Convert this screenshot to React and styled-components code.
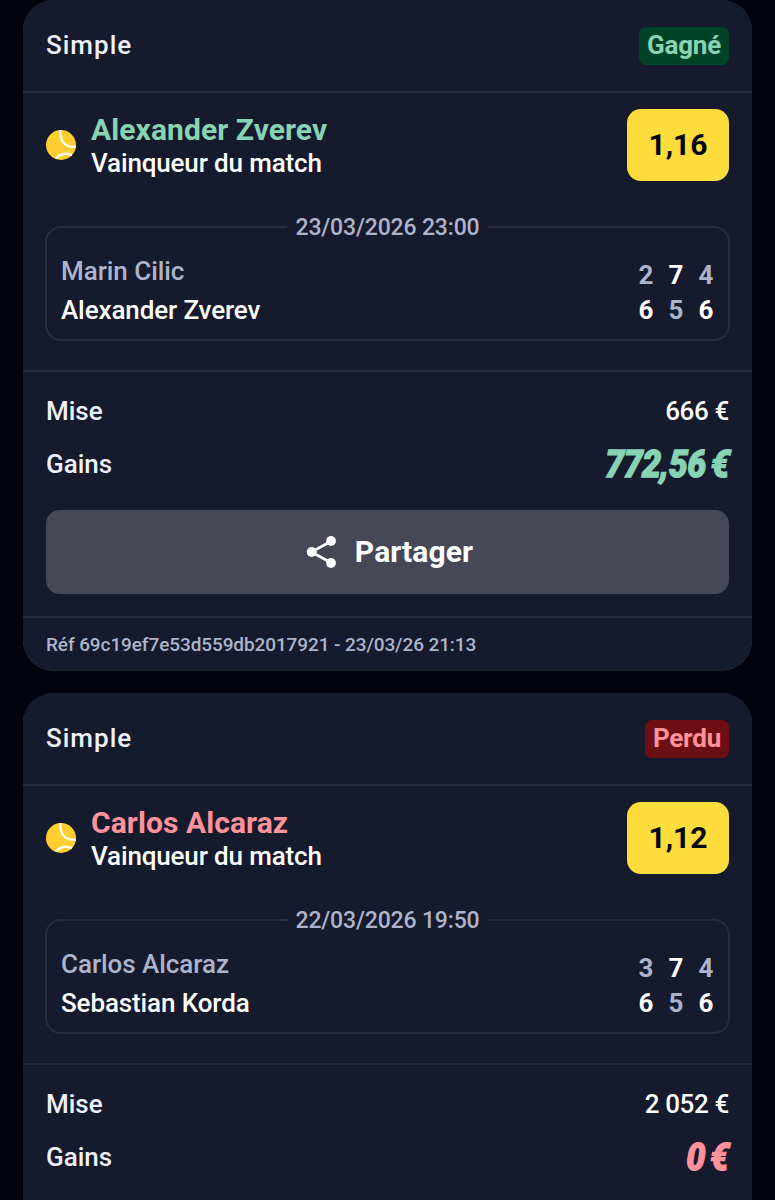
import React from "react";
import styled, { createGlobalStyle } from "styled-components";

const Global = createGlobalStyle`
  * { box-sizing: border-box; }
  html, body { margin: 0; height: 1200px; overflow: hidden; background: #03030f; }
  body { font-family: Roboto, "Liberation Sans", sans-serif; font-weight: 500; color: #fff; }
`;

const tones = {
  won: { text: "#87d3b4", badge: "#004227" },
  lost: { text: "#ff929b", badge: "#6d0e14" },
};
const line = "#2a2d40";
const muted = "#adb4ca";

const Page = styled.main`
  display: flex;
  flex-direction: column;
  gap: 23px;
  height: 1200px;
  padding: 0 23px;
  overflow: hidden;
`;

const Card = styled.article`
  flex: none;
  height: 670px;
  border-radius: 30px;
  background: #161a2d;
  overflow: hidden;
  box-shadow: 0 0.5px 0 #3b3d4c;
`;

const Header = styled.header`
  display: flex;
  align-items: center;
  justify-content: space-between;
  height: 93px;
  padding: 0 23px;
  border-bottom: 2px solid ${line};
`;

const BetType = styled.h2`
  margin: 0 0 1px;
  font-size: 26px;
  line-height: 30px;
  font-weight: 500;
  letter-spacing: 1px;
  color: #eef0fc;
`;

const Badge = styled.span`
  height: 38px;
  padding: 0 8px;
  border-radius: 7px;
  font-size: 26px;
  line-height: 37px;
  font-weight: 700;
  letter-spacing: -0.2px;
  color: ${(p) => tones[p.$tone].text};
  background: ${(p) => tones[p.$tone].badge};
`;

const Selection = styled.section`
  display: flex;
  align-items: center;
  height: 72px;
  margin: 16px 23px 45px;
`;

const Ball = styled.svg`
  width: 30px;
  height: 30px;
  margin-right: 15px;
`;

const Pick = styled.div`
  flex: 1;
  padding-top: 2px;
`;

const PickName = styled.div`
  font-size: 30px;
  line-height: 34px;
  font-weight: 700;
  letter-spacing: 0.08px;
  color: ${(p) => tones[p.$tone].text};
`;

const Market = styled.div`
  font-size: 26px;
  line-height: 32px;
  letter-spacing: -0.15px;
`;

const Odds = styled.div`
  width: 102px;
  height: 72px;
  border-radius: 14px;
  background: #fddc3b;
  color: #05050d;
  font-size: 30px;
  line-height: 72px;
  font-weight: 700;
  text-align: center;
`;

const Match = styled.section`
  display: flex;
  flex-direction: column;
  height: 115px;
  margin: 0 22px 29px;
  border: 2px solid ${line};
  border-radius: 16px;
`;

const Kickoff = styled.time`
  align-self: center;
  height: 26px;
  margin-top: -14px;
  padding: 1px 8px 0;
  background: #161a2d;
  color: ${muted};
  font-size: 23px;
  line-height: 26px;
  letter-spacing: -0.16px;
`;

const Board = styled.div`
  display: flex;
  justify-content: space-between;
  padding: 12px 7px 0 14px;
`;

const Names = styled.div`
  display: flex;
  flex-direction: column;
`;

const Player = styled.span`
  font-size: 26px;
  line-height: 39px;
  letter-spacing: ${(p) => (p.$winner ? "-0.12px" : "-0.05px")};
  color: ${(p) => (p.$winner ? "#fff" : muted)};
`;

const Sets = styled.div`
  display: grid;
  grid-template-columns: repeat(3, 30px);
  grid-auto-rows: 35px;
  padding-top: 6px;
`;

const SetScore = styled.span`
  font-size: 26px;
  line-height: 35px;
  font-weight: 700;
  text-align: center;
  color: ${(p) => (p.$won ? "#fff" : muted)};
`;

const Summary = styled.section`
  height: 246px;
  padding: 12px 23px 0;
  border-top: 2px solid ${line};
`;

const Amount = styled.div`
  display: flex;
  justify-content: space-between;
  align-items: center;
  height: 53px;
  font-size: 26px;
`;

const Label = styled.span`
  color: #eef0fc;
`;

const Stake = styled.span`
  letter-spacing: -0.35px;
`;

const Winnings = styled.strong`
  padding-top: 2px;
  font-size: 38px;
  line-height: 53px;
  font-style: italic;
  font-weight: 900;
  letter-spacing: -0.5px;
  word-spacing: -3px;
  color: ${(p) => tones[p.$tone].text};
  -webkit-text-stroke: 1.3px ${(p) => tones[p.$tone].text};
  transform: scaleX(0.885) skewX(-2deg);
  transform-origin: right center;
`;

const ShareButton = styled.button`
  display: flex;
  align-items: center;
  justify-content: center;
  gap: 18px;
  width: 100%;
  height: 84px;
  margin-top: 20px;
  padding: 0 0 1px 4px;
  border: 0;
  border-radius: 14px;
  background: #464858;
  color: #fff;
  font: 700 30px Roboto, sans-serif;
  letter-spacing: 0.1px;
`;

const ShareIcon = styled.svg`
  width: 31px;
  height: 34px;
`;

const Reference = styled.footer`
  height: 54px;
  padding: 0 23px;
  border-top: 2px solid ${line};
  color: ${muted};
  font-size: 19px;
  line-height: 53px;
  letter-spacing: -0.1px;
`;

const bets = [
  {
    tone: "won", status: "Gagné", pick: "Alexander Zverev", odds: "1,16",
    date: "23/03/2026 23:00", players: ["Marin Cilic", "Alexander Zverev"],
    sets: [[2, 7, 4], [6, 5, 6]], stake: "666 €", gains: "772,56 €",
    reference: "Réf 69c19ef7e53d559db2017921 - 23/03/26 21:13",
  },
  {
    tone: "lost", status: "Perdu", pick: "Carlos Alcaraz", odds: "1,12",
    date: "22/03/2026 19:50", players: ["Carlos Alcaraz", "Sebastian Korda"],
    sets: [[3, 7, 4], [6, 5, 6]], stake: "2 052 €", gains: "0 €",
  },
];

function TennisBall() {
  return (
    <Ball viewBox="0 0 30 30">
      <circle cx="15" cy="15" r="15" fill="#ffcf31" />
      <g fill="none" stroke="#fffbe8" strokeWidth="2.4">
        <path d="M14.3 0C14.1 11.5 18.5 17.5 29.9 16.8" />
        <path d="M10 28.6C13.5 23.8 20 22.3 26 25.1" />
      </g>
    </Ball>
  );
}

function BetCard({ bet }) {
  return (
    <Card>
      <Header>
        <BetType>Simple</BetType>
        <Badge $tone={bet.tone}>{bet.status}</Badge>
      </Header>
      <Selection>
        <TennisBall />
        <Pick>
          <PickName $tone={bet.tone}>{bet.pick}</PickName>
          <Market>Vainqueur du match</Market>
        </Pick>
        <Odds>{bet.odds}</Odds>
      </Selection>
      <Match>
        <Kickoff>{bet.date}</Kickoff>
        <Board>
          <Names>
            {bet.players.map((name, i) => (
              <Player key={name} $winner={i === 1}>{name}</Player>
            ))}
          </Names>
          <Sets>
            {bet.sets.map((row, r) =>
              row.map((score, i) => (
                <SetScore key={`${r}-${i}`} $won={score > bet.sets[1 - r][i]}>{score}</SetScore>
              ))
            )}
          </Sets>
        </Board>
      </Match>
      <Summary>
        <Amount><Label>Mise</Label><Stake>{bet.stake}</Stake></Amount>
        <Amount><Label>Gains</Label><Winnings $tone={bet.tone}>{bet.gains}</Winnings></Amount>
        {bet.reference && (
          <ShareButton>
            <ShareIcon viewBox="0 0 31 34">
              <path d="M25.5 6L5.5 17L25.5 28" fill="none" stroke="#fff" strokeWidth="2.6" />
              <g fill="#fff">
                <circle cx="25" cy="6" r="4.9" />
                <circle cx="5.7" cy="17" r="4.9" />
                <circle cx="25" cy="28" r="4.9" />
              </g>
            </ShareIcon>
            Partager
          </ShareButton>
        )}
      </Summary>
      {bet.reference && <Reference>{bet.reference}</Reference>}
    </Card>
  );
}

export default function App() {
  return (
    <>
      <Global />
      <Page>
        {bets.map((bet) => <BetCard key={bet.date} bet={bet} />)}
      </Page>
    </>
  );
}
